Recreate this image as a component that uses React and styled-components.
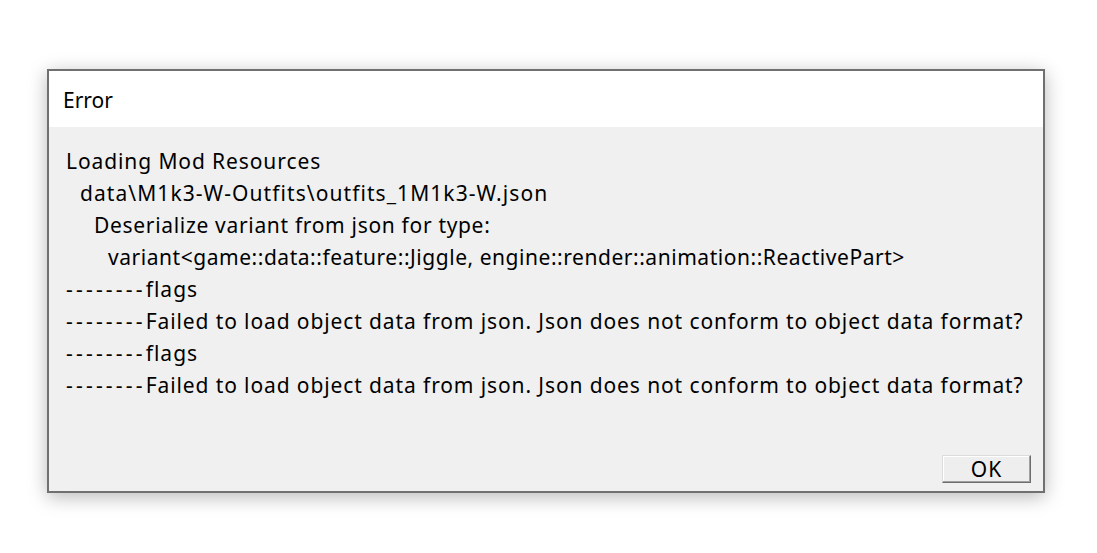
import React from "react";
import styled, { createGlobalStyle } from "styled-components";

const GlobalStyle = createGlobalStyle`
  html, body {
    margin: 0;
    padding: 0;
    background-color: #ffffff;
  }
  body {
    font-family: "Noto Sans", "Open Sans", "DejaVu Sans", sans-serif;
    color: #000000;
  }
`;

const Page = styled.div`
  display: flex;
  flex-direction: row;
  align-items: flex-start;
  width: 1097px;
  height: 553px;
  padding: 69px 0 0 47px;
  box-sizing: border-box;
`;

const Dialog = styled.div`
  display: flex;
  flex-direction: column;
  width: 998px;
  height: 424px;
  box-sizing: border-box;
  border: 2px solid #707070;
  background-color: #f0f0f0;
  box-shadow: 0 4px 18px rgba(0, 0, 0, 0.28);
`;

const TitleBar = styled.div`
  display: flex;
  align-items: center;
  height: 56px;
  padding: 1px 0 0 14px;
  box-sizing: border-box;
  background-color: #ffffff;
  font-size: 21px;
  letter-spacing: 0px;
  line-height: 56px;
`;

const Body = styled.div`
  display: flex;
  flex-direction: column;
  justify-content: space-between;
  flex: 1;
  padding: 18px 12px 8px 17px;
  box-sizing: border-box;
`;

const Message = styled.div`
  display: flex;
  flex-direction: column;
`;

const Line = styled.div`
  padding-left: ${({ depth }) => (depth ? depth * 14 : 0)}px;
  font-size: 21px;
  letter-spacing: ${({ tracking }) => (tracking != null ? tracking : 1)}px;
  line-height: 32px;
  white-space: pre;
`;

const Dashes = styled.span`
  letter-spacing: 3.2px;
`;

const Footer = styled.div`
  display: flex;
  flex-direction: row;
  justify-content: flex-end;
`;

const Button = styled.button`
  width: 89px;
  height: 28px;
  padding: 0;
  box-sizing: border-box;
  border: 1px solid;
  border-color: #dcdcdc #6e6e6e #6e6e6e #dcdcdc;
  box-shadow: inset -1px -1px 0 #a0a0a0, inset 1px 1px 0 #ffffff;
  background-color: #eeeeee;
  font-family: "Noto Sans", "Open Sans", sans-serif;
  font-size: 21px;
  letter-spacing: 1px;
  line-height: 24px;
  color: #000000;
`;

const lines = [
  { depth: 0, tracking: 0.9, text: "Loading Mod Resources" },
  { depth: 1, tracking: 1.07, text: "data\\M1k3-W-Outfits\\outfits_1M1k3-W.json" },
  { depth: 2, tracking: 0.68, text: "Deserialize variant from json for type:" },
  {
    depth: 3,
    tracking: 0.54,
    text: "variant<game::data::feature::Jiggle, engine::render::animation::ReactivePart>",
  },
  { depth: 0, dashes: true, text: "flags" },
  {
    depth: 0,
    dashes: true,
    tracking: 0.89,
    text: "Failed to load object data from json. Json does not conform to object data format?",
  },
  { depth: 0, dashes: true, text: "flags" },
  {
    depth: 0,
    dashes: true,
    tracking: 0.89,
    text: "Failed to load object data from json. Json does not conform to object data format?",
  },
];

export default function App() {
  return (
    <>
      <GlobalStyle />
      <Page>
        <Dialog>
          <TitleBar>{"Error"}</TitleBar>
          <Body>
            <Message>
              {lines.map((line, i) => (
                <Line key={i} depth={line.depth} tracking={line.tracking}>
                  {line.dashes && <Dashes>{"--------"}</Dashes>}
                  {line.text}
                </Line>
              ))}
            </Message>
            <Footer>
              <Button>{"OK"}</Button>
            </Footer>
          </Body>
        </Dialog>
      </Page>
    </>
  );
}
